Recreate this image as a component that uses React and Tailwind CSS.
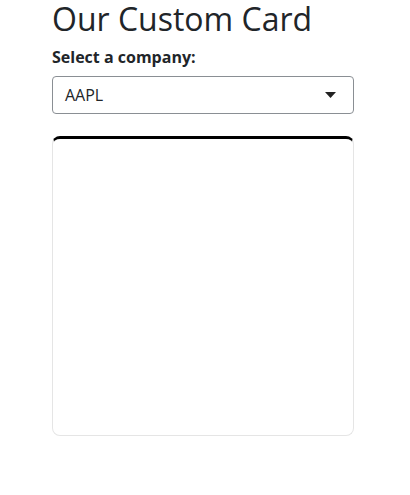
export default function App() {
  return (
    <div
      className="min-h-screen bg-white text-[#212529]"
      style={{ fontFamily: '"Open Sans", sans-serif' }}
    >
      <div className="ml-[52px] w-[302px]">
        <h1 className="text-[32px] leading-[1.2] font-normal">Our Custom Card</h1>
        <label className="mt-[7px] block text-[16px] font-bold leading-[24px]">
          Select a company:
        </label>
        <div className="relative mt-[7px] flex h-[38px] items-center rounded-[4px] border border-[#8a8f94] px-3 text-[16px]">
          <span>AAPL</span>
          <svg
            className="absolute right-[17px] top-[15px]"
            width="11"
            height="6"
            viewBox="0 0 11 6"
          >
            <path d="M0 0 L11 0 L5.5 6 Z" fill="#222" />
          </svg>
        </div>
        <div className="mt-[22px] h-[300px] rounded-[8px] border border-[#e5e5e5] border-t-[3px] border-t-black" />
      </div>
    </div>
  );
}
